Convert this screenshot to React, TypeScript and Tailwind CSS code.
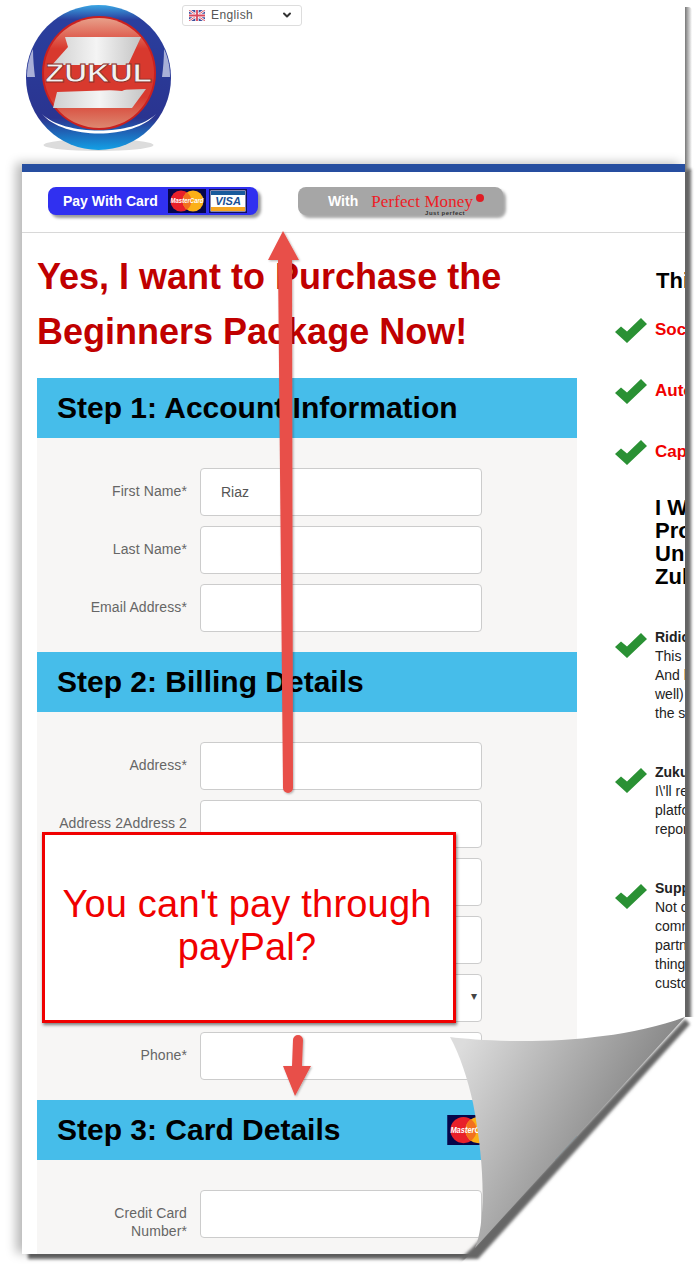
import { ChevronDown } from 'lucide-react';

function Logo() {
  return (
    <svg width="150" height="155" viewBox="0 0 150 155">
      <defs>
        <linearGradient id="ring" x1="0" y1="0" x2="0" y2="1">
          <stop offset="0" stopColor="#3aa6e4" />
          <stop offset="0.1" stopColor="#2a3f9e" />
          <stop offset="0.78" stopColor="#2a3490" />
          <stop offset="1" stopColor="#12a0e6" />
        </linearGradient>
        <linearGradient id="ball" x1="0" y1="0" x2="0" y2="1">
          <stop offset="0" stopColor="#e8a08a" />
          <stop offset="0.28" stopColor="#d8392e" />
          <stop offset="0.72" stopColor="#d8392e" />
          <stop offset="1" stopColor="#dd8870" />
        </linearGradient>
        <linearGradient id="metal" x1="0" y1="0" x2="1" y2="0">
          <stop offset="0" stopColor="#cfcfcf" />
          <stop offset="0.5" stopColor="#f4f4f4" />
          <stop offset="1" stopColor="#c4c4c4" />
        </linearGradient>
      </defs>
      <ellipse cx="74.5" cy="144" rx="55" ry="6" fill="#dcdcdc" />
      <circle cx="74.5" cy="76.5" r="72.5" fill="url(#ring)" />
      <path d="M3 76 C3 66 5 56 9 48 C9 58 10 68 11 76 Z" fill="#a9b0d8" />
      <path d="M146 76 C146 66 144 56 140 48 C140 58 139 68 138 76 Z" fill="#a9b0d8" />
      <path d="M18 113 C40 139 110 139 132 113 C110 135 40 135 18 113 Z" fill="#ffffff" />
      <circle cx="75" cy="72" r="57" fill="#c9201f" />
      <circle cx="75" cy="72" r="55" fill="url(#ball)" />
      <polygon points="41,36 117,36 104,64 28,64 44,46" fill="url(#metal)" />
      <polygon points="33,91 122,88 108,107 29,107" fill="url(#metal)" />
      <polygon points="73,88 86,81 118,81 98,90" fill="#d8392e" />
      <text x="74.5" y="81" textAnchor="middle" fontFamily="Liberation Sans" fontWeight="700" fontSize="26" fill="#f2f2f2" stroke="#8a2b24" strokeWidth="0.8" textLength="107" lengthAdjust="spacingAndGlyphs">ZUKUL</text>
    </svg>
  );
}

function UkFlag() {
  return (
    <svg width="16" height="11" viewBox="0 0 16 11">
      <rect width="16" height="11" fill="#3c4f9c" />
      <path d="M0 0 L16 11 M16 0 L0 11" stroke="#ffffff" strokeWidth="2.4" />
      <path d="M0 0 L16 11 M16 0 L0 11" stroke="#d9485c" strokeWidth="0.9" />
      <path d="M8 0 V11 M0 5.5 H16" stroke="#ffffff" strokeWidth="3.4" />
      <path d="M8 0 V11 M0 5.5 H16" stroke="#d9485c" strokeWidth="1.8" />
    </svg>
  );
}

function MasterCard({ width = 38, height = 24 }: { width?: number; height?: number }) {
  return (
    <svg width={width} height={height} viewBox="0 0 38 24" className="shrink-0">
      <rect width="38" height="24" fill="#06064a" />
      <circle cx="13" cy="12" r="10.5" fill="#e8202a" />
      <circle cx="25" cy="12" r="10.5" fill="#fbb017" />
      <path d="M19 3.4 a10.5 10.5 0 0 1 0 17.2 a10.5 10.5 0 0 1 0 -17.2" fill="#f2701f" />
      <text x="19" y="14" textAnchor="middle" fontFamily="Liberation Sans" fontStyle="italic" fontWeight="700" fontSize="7" fill="#ffffff" textLength="33" lengthAdjust="spacingAndGlyphs">MasterCard</text>
    </svg>
  );
}

function Visa() {
  return (
    <svg width="38" height="24" viewBox="0 0 38 24" className="shrink-0">
      <rect width="38" height="24" fill="#10105a" />
      <rect x="1.5" y="1.5" width="35" height="21" fill="#ffffff" />
      <rect x="2" y="2" width="34" height="4" fill="#1a5a9c" />
      <rect x="2" y="18" width="34" height="4" fill="#f5a623" />
      <text x="19" y="16" textAnchor="middle" fontFamily="Liberation Sans" fontStyle="italic" fontWeight="700" fontSize="11" fill="#1a4f95">VISA</text>
    </svg>
  );
}

function Check() {
  return (
    <svg width="32" height="25" viewBox="0 0 32 25" className="shrink-0">
      <polygon points="0,14 6,8.5 12,13.5 26,0 32,6 12,25" fill="#2a9134" />
    </svg>
  );
}

function StepHeader({ title, card }: { title: string; card?: boolean }) {
  return (
    <div className="flex h-[60px] items-center justify-between bg-[#46bdea] pl-5 pr-[82px]">
      <h2 className="text-[30px] font-bold leading-none text-black">{title}</h2>
      {card && <MasterCard width={48} height={30} />}
    </div>
  );
}

function Field({ label, value, select }: { label: string; value?: string; select?: boolean }) {
  return (
    <div className="flex items-start">
      <label className="w-[150px] shrink-0 pl-5 pt-[14px] text-right text-sm leading-[18px] tracking-[0.1px] text-[#666]">{label}</label>
      <div className="relative ml-[13px] h-12 w-[282px] shrink-0">
        <input
          readOnly
          value={value ?? ''}
          className="h-12 w-full rounded border border-[#ccc] bg-white px-5 text-sm text-[#555]"
        />
        {select && <span className="absolute right-[5px] top-[14px] text-xs text-[#444]">▾</span>}
      </div>
    </div>
  );
}

const benefits = [
  {
    title: 'Ridiculous',
    lines: ['This is', 'And here', 'well) are', 'the same'],
  },
  {
    title: 'Zukul',
    lines: ["I\\'ll report", 'platform', 'reports'],
  },
  {
    title: 'Support',
    lines: ['Not only', 'community', 'partners', 'things', 'customer'],
  },
];

export default function App() {
  return (
    <div className="relative h-[1269px] w-[700px] overflow-hidden bg-white font-['Liberation_Sans',Arial,sans-serif]">
      <header className="relative flex h-[164px] pl-6">
        <div className="pt-[1px]">
          <Logo />
        </div>
        <div className="ml-2 mt-[5px] flex h-[21px] w-[120px] items-center rounded-[3px] border border-[#ddd] pb-[1px] pl-[6px] pr-2">
          <UkFlag />
          <span className="ml-[6px] text-xs tracking-[0.4px] text-[#555]">English</span>
          <ChevronDown className="ml-auto h-3 w-3 text-[#333]" strokeWidth={4} />
        </div>
        {/* right edge of the sheet runs up past the header */}
        <div className="absolute left-[685px] top-[7px] h-[165px] w-[7px] rounded-tr bg-gradient-to-r from-[#777] to-transparent" />
      </header>

      <main className="ml-[22px] h-[1090px] w-[663px] overflow-hidden border-t-8 border-[#264ea0] bg-white shadow-[6px_5px_3px_rgba(0,0,0,0.6),-6px_-1px_10px_rgba(0,0,0,0.28)]">
        <div className="flex h-[61px] items-start border-b border-[#d8d8d8] pl-[26px] pt-[15px]">
          <div className="flex h-7 w-[210px] items-center rounded-lg bg-[#3030f0] pl-[15px] shadow-[3px_3px_3px_rgba(0,0,0,0.4)]">
            <span className="text-sm font-bold text-white">Pay With Card</span>
            <span className="ml-[10px] flex gap-[3px]">
              <MasterCard />
              <Visa />
            </span>
          </div>
          <div className="ml-10 flex h-7 w-[205px] items-center rounded-lg bg-[#a6a6a6] pl-[30px] shadow-[3px_3px_3px_rgba(0,0,0,0.35)]">
            <span className="text-sm font-bold text-white">With</span>
            <span className="relative ml-[13px] whitespace-nowrap font-['Liberation_Serif',serif] text-[17px] leading-none tracking-[0.1px] text-[#ee1c25]">
              Perfect Money
              <span className="absolute bottom-[-6px] right-[8px] font-['Liberation_Sans',sans-serif] text-[6px] font-bold tracking-[0.5px] text-[#333]">Just perfect</span>
            </span>
            <span className="mb-[7px] ml-[3px] h-2 w-2 rounded-full bg-[#e01c24]" />
          </div>
        </div>

        <div className="flex">
          <div className="ml-[15px] w-[540px] shrink-0 pt-4">
            <h1 className="mb-[19px] text-[36px] font-bold leading-[55px] text-[#c00000]">
              Yes, I want to Purchase the
              <br />
              Beginners Package Now!
            </h1>

            <StepHeader title="Step 1: Account Information" />
            <div className="flex flex-col gap-[10px] bg-[#f7f6f5] pb-5 pt-[30px]">
              <Field label="First Name*" value="Riaz" />
              <Field label="Last Name*" />
              <Field label="Email Address*" />
            </div>

            <StepHeader title="Step 2: Billing Details" />
            <div className="flex flex-col gap-[10px] bg-[#f7f6f5] pb-5 pt-[30px]">
              <Field label="Address*" />
              <Field label="Address 2Address 2" />
              <Field label="City*" />
              <Field label="State*" />
              <Field label="Country*" select />
              <Field label="Phone*" />
            </div>

            <StepHeader title="Step 3: Card Details" card />
            <div className="h-[94px] bg-[#f7f6f5] pt-[30px]">
              <Field label="Credit Card Number*" />
            </div>
          </div>

          <aside className="ml-[38px] w-[320px] shrink-0">
            <h3 className="ml-[41px] mt-[35px] text-[22px] font-bold leading-[26px] text-black">This</h3>
            <div className="mt-6 flex flex-col gap-9">
              {['Social', 'Automated', 'Capture'].map((item) => (
                <div key={item} className="flex h-[25px] items-start gap-2">
                  <Check />
                  <span className="text-[17px] font-bold leading-[24px] text-[#f00000]">{item}</span>
                </div>
              ))}
            </div>
            <h3 className="ml-10 mt-[31px] text-[22px] font-bold leading-[23px] text-black">
              I Want
              <br />
              Product
              <br />
              Unlimited
              <br />
              Zukul
            </h3>
            <div className="mt-10 flex flex-col gap-10">
              {benefits.map((b) => (
                <div key={b.title} className="flex items-start gap-2">
                  <div className="pt-[5px]">
                    <Check />
                  </div>
                  <div className="whitespace-nowrap text-sm leading-[19px] text-[#222]">
                    <div className="font-bold">{b.title}</div>
                    {b.lines.map((line) => (
                      <div key={line}>{line}</div>
                    ))}
                  </div>
                </div>
              ))}
            </div>
          </aside>
        </div>
      </main>

      {/* arrows drawn over the page */}
      <svg className="pointer-events-none absolute left-0 top-0" width="700" height="1269" viewBox="0 0 700 1269">
        <defs>
          <filter id="soft" x="-20%" y="-20%" width="140%" height="140%">
            <feDropShadow dx="1" dy="1" stdDeviation="1.2" floodColor="#000" floodOpacity="0.3" />
          </filter>
          <filter id="blur" x="-10%" y="-10%" width="120%" height="120%">
            <feGaussianBlur stdDeviation="1.6" />
          </filter>
          <linearGradient id="curl" gradientUnits="userSpaceOnUse" x1="460" y1="1050" x2="625" y2="1140">
            <stop offset="0" stopColor="#dcdcdc" />
            <stop offset="1" stopColor="#868686" />
          </linearGradient>
        </defs>
        <g filter="url(#soft)" fill="#e8504a">
          <path d="M278 260 L268 260 L283 231 L299 260 L292 260 L293 788 A5 5 0 0 1 283 788 Z" />
          <path d="M293 1040 A5 5 0 0 1 303 1040 L302 1066 L311 1066 L295 1096 L283 1066 L292 1066 Z" />
        </g>
      </svg>

      {/* red callout */}
      <div className="absolute left-[42px] top-[832px] flex h-[191px] w-[414px] items-center justify-center border-[3px] border-[#f00000] bg-white pb-1 pr-1 text-center text-[38px] leading-[43px] tracking-[0.2px] text-[#f00000] shadow-[1px_2px_3px_rgba(0,0,0,0.5)]">
        <p>
          You can't pay through
          <br />
          payPal?
        </p>
      </div>

      {/* page curl */}
      <svg className="pointer-events-none absolute left-0 top-0" width="700" height="1269" viewBox="0 0 700 1269">
        <polygon points="685,1017 700,1017 700,1269 455,1269 470,1254" fill="#ffffff" />
        <polygon points="685,1019 690,1024 478,1259 460,1259 472,1248" fill="#666666" filter="url(#blur)" />
        <path
          d="M450 1037 C490 1042 600 1048 685 1017 L475 1248 C485 1225 486 1170 473 1103 C468 1080 460 1055 450 1037 Z"
          fill="url(#curl)"
        />
      </svg>
    </div>
  );
}
